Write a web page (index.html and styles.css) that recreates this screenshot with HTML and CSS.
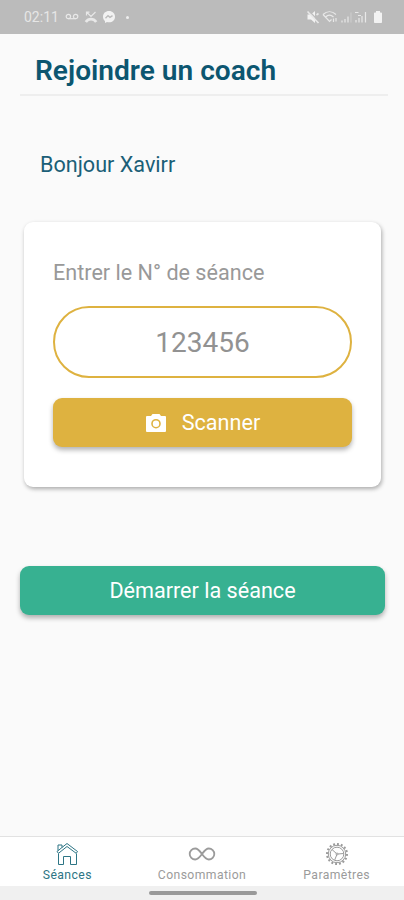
FILE: index.html
```html
<!DOCTYPE html>
<html lang="fr">
<head>
    <meta charset="UTF-8">
    <meta name="viewport" content="width=device-width, initial-scale=1.0">
    <title>Rejoindre un coach</title>
    <link rel="stylesheet" href="styles.css">
</head>
<body>
    <div class="status-bar">
        <span class="time">02:11</span>
        <svg class="voicemail" width="14" height="8" viewBox="0 0 14 8">
            <circle cx="3.4" cy="3.5" r="2.2"/>
            <circle cx="10.6" cy="3.5" r="2.2"/>
            <path d="M3.4 5.7h7.2"/>
        </svg>
        <svg class="missed" width="14" height="14" viewBox="0 0 14 14">
            <path d="M3 2.5l4 4 4.500-4.500M2.500 5.500V2.200h3"/>
            <path class="thick" d="M1.800 12c2.800-3.800 7.600-3.800 10.400 0"/>
        </svg>
        <svg class="messenger" width="14" height="14" viewBox="0 0 14 14">
            <path class="fill" d="M7 1C3.500 1 1 3.400 1 6.700c0 1.800.8 3.300 2 4.300V13l2-1c.6.200 1.300.300 2 .3 3.500 0 6-2.400 6-5.600S10.500 1 7 1z"/>
            <path class="bolt" d="M3.500 8.200l2.500-2.600 2 1.700 2.500-1.700"/>
        </svg>
        <span class="dot"></span>
        <div class="status-right">
            <svg width="14" height="14" viewBox="0 0 14 14">
                <path class="fill" d="M1.500 4.500h3.500l4-3.500v12L5 9.500H1.500z"/>
                <path class="cut" d="M3 1L13.500 12"/>
                <path class="slash" d="M1.500 1.500L12.500 13M10.500 5l2-1.500"/>
            </svg>
            <svg width="16" height="14" viewBox="0 0 16 14">
                <path d="M1 4.500c4-3.700 9-3.700 13 0M3.500 7c2.500-2.200 5.500-2.200 8 0M1 4.500l6.500 7 2-2"/>
                <path d="M11.500 12V8.500M14 8v3.500"/>
            </svg>
            <svg width="12" height="14" viewBox="0 0 12 14">
                <path d="M2 12.500v-2M5 12.500V9M8 12.500V6.500"/>
                <path class="faint" d="M11 12.500V2.500"/>
            </svg>
            <svg width="13" height="14" viewBox="0 0 13 14">
                <path d="M2 12.500V10M5 12.500V8M8 12.500V6M11.500 12.500V2M1 2.500h3.500M4 5.500h3"/>
            </svg>
            <svg class="battery" width="10" height="14" viewBox="0 0 10 14">
                <path class="fill" d="M3 1h4v1.500h1.200q.8 0 .8.800v9q0 .7-.8.700H1.800q-.8 0-.8-.7v-9q0-.8.800-.8H3z"/>
            </svg>
        </div>
    </div>

    <header class="header">
        <h1>Rejoindre un coach</h1>
    </header>

    <main class="content">
        <p class="hello">Bonjour Xavirr</p>
        <div class="card">
            <label class="card-label" for="session">Entrer le N° de séance</label>
            <input class="session-input" id="session" type="text" placeholder="123456">
            <button class="btn btn-scan">
                <svg width="20" height="18" viewBox="0 0 20 18">
                    <path fill="#fff" d="M6.500 0h7l1.500 2h4q1 0 1 1v14q0 1-1 1H1q-1 0-1-1V3q0-1 1-1h4z"/>
                    <circle cx="10" cy="9.700" r="4" fill="none" stroke="#deb240" stroke-width="1.600"/>
                </svg>
                <span>Scanner</span>
            </button>
        </div>
        <button class="btn btn-start">Démarrer la séance</button>
    </main>

    <nav class="tabs">
        <div class="tab active">
            <svg width="24" height="24" viewBox="0 0 24 24">
                <path d="M2 9.500L12 1.500l10.500 8-1.300 1.800L12 4.500l-8.500 6.800z"/>
                <path d="M3 8.500V3h4v2.500"/>
                <path d="M3.500 11.500v11h5V14.500h7v8H21.500V11.500"/>
            </svg>
            <span>Séances</span>
        </div>
        <div class="tab">
            <svg class="infinity" width="28" height="24" viewBox="0 0 28 24">
                <path d="M14 12C11.500 8.500 10 6.500 7.200 6.500a5.500 5.500 0 0 0 0 11C10 17.500 11.500 15.500 14 12s4-5.500 6.800-5.500a5.500 5.500 0 0 1 0 11C18 17.500 16.500 15.500 14 12z"/>
            </svg>
            <span>Consommation</span>
        </div>
        <div class="tab">
            <svg width="24" height="24" viewBox="0 0 24 24">
                <circle class="teeth" cx="12" cy="12" r="10" pathLength="48"/>
                <circle cx="12" cy="12" r="8.700"/>
                <circle cx="12" cy="12" r="6.800"/>
                <circle cx="12" cy="12" r="1"/>
                <path d="M11.200 11.300L7 7.500M13 12l5.500-.5M11.700 13l-2 5"/>
            </svg>
            <span>Paramètres</span>
        </div>
    </nav>
    <div class="gesture-bar"><span class="handle"></span></div>
</body>
</html>
```
FILE: styles.css
```css
* {
    box-sizing: border-box;
}
body {
    margin: 0;
    height: 100vh;
    display: flex;
    flex-direction: column;
    overflow: hidden;
    font-family: Roboto, sans-serif;
    background-color: #fafafa;
}
svg {
    flex: none;
}

/* status bar */
.status-bar {
    flex: none;
    height: 34px;
    display: flex;
    align-items: center;
    padding: 0 21px 0 24px;
    background-color: #bbb;
    color: #e6e6e6;
}
.time {
    width: 36px;
    font-size: 14px;
}
.status-bar svg {
    fill: none;
    stroke: #e8e8e8;
    stroke-width: 1.2;
}
.status-bar .fill {
    fill: #f2f2f2;
    stroke: none;
}
.status-bar .thick {
    stroke-width: 2.8;
}
.status-bar .slash {
    stroke-width: 1.6;
}
.status-bar .faint {
    stroke: #ccc;
}
.status-bar .cut,
.status-bar .bolt {
    stroke: #bbb;
    stroke-width: 1.4;
}
.voicemail,
.missed,
.messenger {
    margin-left: 5px;
}
.messenger {
    margin-left: 4px;
}
.dot {
    width: 3px;
    height: 3px;
    margin-left: 10px;
    border-radius: 50%;
    background-color: #eee;
}
.status-right {
    display: flex;
    align-items: center;
    gap: 2px;
    margin-left: auto;
}
.status-right .battery {
    margin-left: 4px;
}

/* header */
.header {
    flex: none;
    height: 62px;
    margin: 0 16px 0 20px;
    padding: 20px 0 0 15px;
    border-bottom: 2px solid #eee;
}
.header h1 {
    margin: 0;
    font-size: 28.1px;
    line-height: 33px;
    font-weight: 600;
    color: #0c5670;
    white-space: nowrap;
}

/* content */
.content {
    flex: 1;
    padding: 54px 19px 0 20px;
}
.hello {
    margin: 0 0 0 20px;
    font-size: 21.6px;
    line-height: 30px;
    color: #1b5f77;
}
.card {
    height: 265px;
    margin: 42px 4px 0 4px;
    padding: 36px 29px 0;
    border-radius: 9px;
    background-color: white;
    box-shadow: 1px 2px 4px rgba(0,0,0,0.32);
}
.card-label {
    display: block;
    font-size: 21.6px;
    line-height: 30px;
    color: #999;
}
.session-input {
    display: block;
    width: 100%;
    height: 72px;
    margin-top: 18px;
    padding: 0;
    border: 2px solid #deb240;
    border-radius: 36px;
    background-color: white;
    outline: none;
    font-family: inherit;
    font-size: 28px;
    text-align: center;
}
.session-input::placeholder {
    color: #929292;
}
.btn {
    width: 100%;
    height: 49px;
    display: flex;
    align-items: center;
    justify-content: center;
    padding: 0;
    border: none;
    border-radius: 9px;
    font-family: inherit;
    font-size: 21.6px;
    color: white;
    box-shadow: 0 3px 5px rgba(0,0,0,0.3);
}
.btn-scan {
    gap: 16px;
    margin-top: 20px;
    padding-left: 1px;
    background-color: #deb240;
}
.btn-start {
    margin-top: 79px;
    background-color: #37b191;
}

/* bottom tabs */
.tabs {
    flex: none;
    height: 50px;
    display: flex;
    border-top: 1px solid #e2e2e2;
    background-color: white;
}
.tab {
    flex: 1;
    display: flex;
    flex-direction: column;
    align-items: center;
    padding-top: 5px;
    color: #9b9b9b;
    font-size: 12.2px;
    line-height: 18px;
    letter-spacing: 0.4px;
}
.tab svg {
    fill: none;
    stroke: currentColor;
    stroke-width: 1;
}
.tab .infinity {
    stroke-width: 1.8;
}
.tab .teeth {
    stroke-width: 2;
    stroke-dasharray: 1.5 1.5;
}
.tab.active {
    color: #2d7585;
}
.gesture-bar {
    flex: none;
    height: 14px;
    display: flex;
    justify-content: center;
    padding: 5px 0 0 2px;
    background-color: #f0f0f0;
}
.handle {
    width: 108px;
    height: 4px;
    border-radius: 2px;
    background-color: #999;
}
```
